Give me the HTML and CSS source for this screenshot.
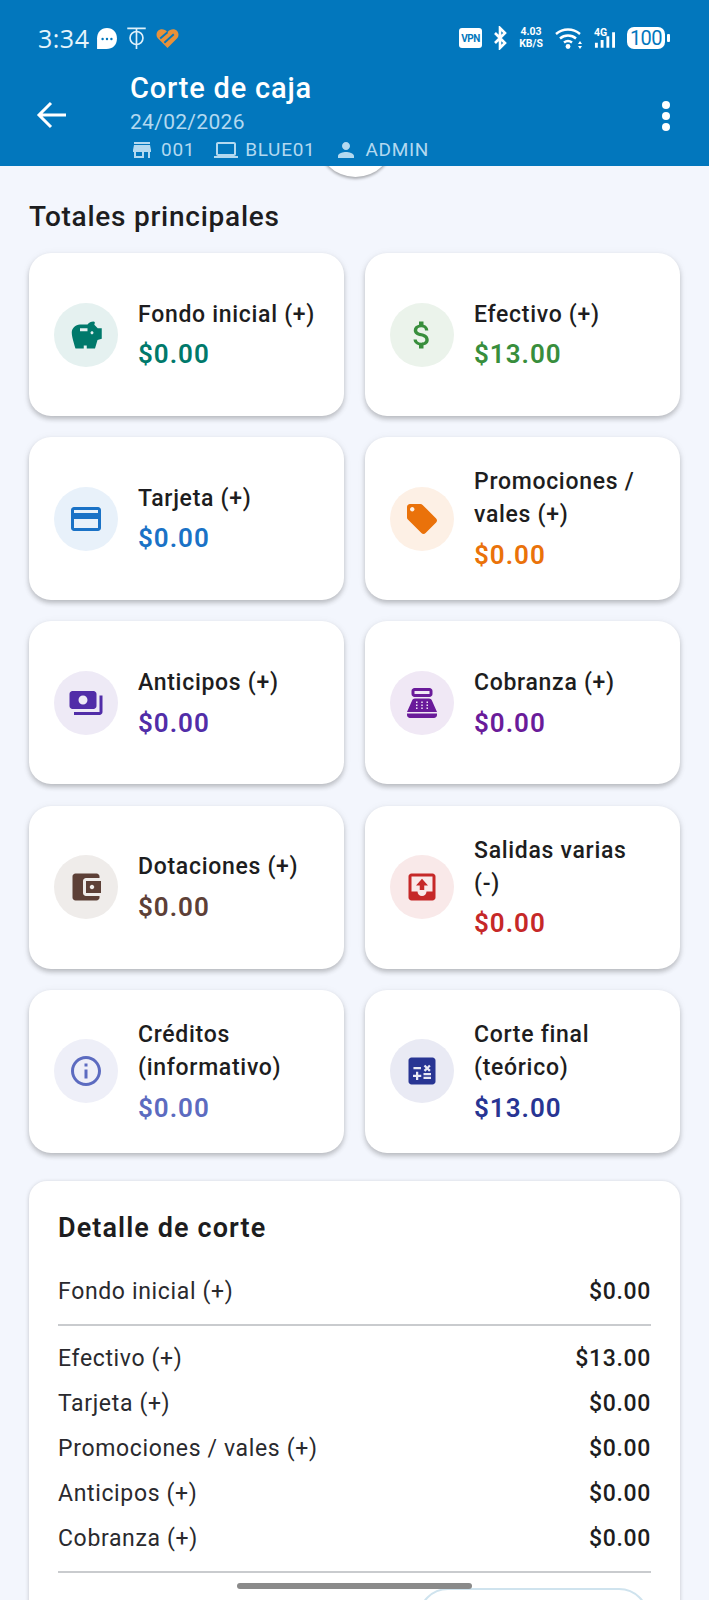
FILE: index.html
```html
<!DOCTYPE html>
<html lang="es">
<head>
<meta charset="utf-8">
<title>Corte de caja</title>
<link rel="stylesheet" href="styles.css">
</head>
<body>
<div class="screen">
  <header class="appbar">
    <div class="status">
      <div class="status-left">
        <span class="time">3:34</span>
        <svg class="si" width="20" height="21" viewBox="2 2 18 19"><path d="M11 2c5.500 0 9 4 9 9.500 0 6-4 9.500-9.500 9.500H2V11.500C2 6 5.500 2 11 2z" fill="#fff"/><circle cx="7" cy="12" r="1.100" fill="#0277bd"/><circle cx="11" cy="12" r="1.100" fill="#0277bd"/><circle cx="15" cy="12" r="1.100" fill="#0277bd"/></svg>
        <svg class="si" width="21" height="24" viewBox="2 0 20 26"><path d="M2 2.500h20M12 3v22" stroke="#dff1fb" stroke-width="1.800" fill="none"/><circle cx="12" cy="13" r="7" stroke="#dff1fb" stroke-width="1.800" fill="none"/></svg>
        <svg class="si" width="23" height="19" viewBox="1 3 22 18"><path d="M12 21L2.500 11.500C.5 9 1.500 4.500 5 3.500c2.500-.7 5 .2 7 2.500 2-2.300 4.500-3.200 7-2.500 3.500 1 4.500 5.500 2.500 8z" fill="#e8913a"/><path d="M5 12l7-6M9 16l9-8" stroke="#0277bd" stroke-width="1.800"/></svg>
      </div>
      <div class="status-right">
        <span class="vpn">VPN</span>
        <svg class="si" width="16" height="24" viewBox="0 0 16 24"><path d="M3 7l10 10-5 5V2l5 5L3 17" stroke="#fff" stroke-width="2.600" fill="none"/></svg>
        <span class="speed">4.03<br>KB/S</span>
        <svg class="si" width="30" height="24" viewBox="0 0 30 24"><path d="M2 8c7-6 17-6 24 0M6 12.500c4.500-4 11.500-4 16 0M10 16.500c2.500-2 5.500-2 8 0" stroke="#fff" stroke-width="2.400" fill="none"/><circle cx="14" cy="20.500" r="2.400" fill="#fff"/><path d="M26 15l2 3h-4zM26 23l2-3h-4z" fill="#fff"/></svg>
        <span class="net"><span class="net-label">4G</span>
          <svg width="21" height="16" viewBox="0 0 22 16"><path d="M1 16v-5h3v5zM7 16V8h3v8zM13 16V4h3v12zM19 16V0h3v16z" fill="#fff"/></svg>
        </span>
        <span class="batt"><span class="batt-body">100</span><span class="batt-tip"></span></span>
      </div>
    </div>
    <div class="toolbar">
      <svg class="back" width="32" height="32" viewBox="0 0 32 32"><path d="M30 16H4M15 4L3 16l12 12" stroke="#fff" stroke-width="3" fill="none"/></svg>
      <div class="titles">
        <div class="title">Corte de caja</div>
        <div class="date">24/02/2026</div>
        <div class="meta">
          <span class="meta-item"><svg width="24" height="24" viewBox="0 0 24 24"><path d="M20 4H4v2h16V4zm1 10v-2l-1-5H4l-1 5v2h1v6h10v-6h4v6h2v-6h1zm-9 4H6v-4h6v4z" fill="#b3d9f0"/></svg>001</span>
          <span class="meta-item"><svg width="24" height="24" viewBox="0 0 24 24"><path d="M20 18c1.100 0 2-.9 2-2V6c0-1.100-.9-2-2-2H4c-1.100 0-2 .9-2 2v10c0 1.100.9 2 2 2H0v2h24v-2h-4zM4 6h16v10H4V6z" fill="#b3d9f0"/></svg>BLUE01</span>
          <span class="meta-item"><svg width="24" height="24" viewBox="0 0 24 24"><path d="M12 12c2.200 0 4-1.800 4-4s-1.800-4-4-4-4 1.800-4 4 1.800 4 4 4zm0 2c-2.700 0-8 1.300-8 4v2h16v-2c0-2.700-5.300-4-8-4z" fill="#b3d9f0"/></svg>ADMIN</span>
        </div>
      </div>
      <svg class="more" width="8" height="32" viewBox="0 0 8 32"><circle cx="4" cy="5" r="4" fill="#fff"/><circle cx="4" cy="16" r="4" fill="#fff"/><circle cx="4" cy="27" r="4" fill="#fff"/></svg>
    </div>
  </header>
  <span class="peek"></span>

  <main class="content">
    <h2 class="section">Totales principales</h2>
    <section class="grid">
      <article class="card teal"><span class="ic"><svg width="36" height="36" viewBox="0 0 24 24"><path d="M19.830 7.500l-2.270-2.270c.07-.42.18-.81.32-1.150C18.040 3.710 17.700 3 17 3c-1.640 0-3.090.79-4 2H8C4.960 5 2.500 7.460 2.500 10.500S5 21 5 21h5.500v-2h2v2H18l1.680-5.590 2.820-.94V7.500h-2.670zM13 9.500H8v-2h5v2zm3 2c-.55 0-1-.45-1-1s.45-1 1-1 1 .45 1 1-.45 1-1 1z" fill="currentColor"/></svg></span><div class="tx"><div class="lb">Fondo inicial (+)</div><div class="val">$0.00</div></div></article>
      <article class="card green"><span class="ic"><svg width="36" height="36" viewBox="0 0 24 24"><path d="M11.800 10.900c-2.270-.59-3-1.200-3-2.150 0-1.090 1.010-1.850 2.700-1.850 1.780 0 2.440.85 2.500 2.100h2.210c-.07-1.720-1.120-3.300-3.210-3.810V3h-3v2.160c-1.940.42-3.500 1.680-3.500 3.610 0 2.310 1.910 3.460 4.700 4.130 2.500.6 3 1.480 3 2.410 0 .69-.49 1.790-2.700 1.790-2.060 0-2.870-.92-2.980-2.100h-2.200c.12 2.190 1.760 3.420 3.680 3.830V21h3v-2.150c1.950-.37 3.500-1.500 3.500-3.550 0-2.840-2.430-3.810-4.700-4.400z" fill="currentColor"/></svg></span><div class="tx"><div class="lb">Efectivo (+)</div><div class="val">$13.00</div></div></article>
      <article class="card blue"><span class="ic"><svg width="36" height="36" viewBox="0 0 24 24"><path d="M20 4H4c-1.100 0-2 .9-2 2v12c0 1.100.9 2 2 2h16c1.100 0 2-.9 2-2V6c0-1.100-.9-2-2-2zm0 14H4v-6h16v6zm0-10H4V6h16v2z" fill="currentColor"/></svg></span><div class="tx"><div class="lb">Tarjeta (+)</div><div class="val">$0.00</div></div></article>
      <article class="card orange"><span class="ic"><svg width="36" height="36" viewBox="0 0 24 24"><path d="M21.400 11.600l-9-9C12 2.200 11.500 2 11 2H4c-1.100 0-2 .9-2 2v7c0 .6.200 1.100.6 1.400l9 9c.4.4.9.6 1.400.6s1-.2 1.400-.6l7-7c.4-.4.6-.9.6-1.400 0-.6-.2-1.100-.6-1.400zM5.500 7C4.700 7 4 6.300 4 5.500S4.700 4 5.500 4 7 4.700 7 5.500 6.300 7 5.500 7z" fill="currentColor"/></svg></span><div class="tx"><div class="lb">Promociones / vales (+)</div><div class="val">$0.00</div></div></article>
      <article class="card deep"><span class="ic"><svg width="36" height="36" viewBox="0 0 24 24"><path d="M19 14V6c0-1.100-.9-2-2-2H3c-1.100 0-2 .9-2 2v8c0 1.100.9 2 2 2h14c1.100 0 2-.9 2-2zm-9-1c-1.700 0-3-1.300-3-3s1.300-3 3-3 3 1.300 3 3-1.300 3-3 3zm13-6v11c0 1.100-.9 2-2 2H4v-2h17V7h2z" fill="currentColor"/></svg></span><div class="tx"><div class="lb">Anticipos (+)</div><div class="val">$0.00</div></div></article>
      <article class="card purple"><span class="ic"><svg width="36" height="36" viewBox="0 0 24 24"><path d="M17 2H7c-1.100 0-2 .9-2 2v2c0 1.100.9 2 2 2h10c1.100 0 2-.9 2-2V4c0-1.100-.9-2-2-2zm0 4H7V4h10v2zm3 16H4c-1.100 0-2-.9-2-2v-1h20v1c0 1.100-.9 2-2 2zM18.530 10.190C18.230 9.470 17.550 9 16.780 9H7.220c-.77 0-1.450.47-1.750 1.190L2 18h20l-3.470-7.810zM9 16H8v-1h1v1zm0-2H8v-1h1v1zm0-2H8v-1h1v1zm3.500 4h-1v-1h1v1zm0-2h-1v-1h1v1zm0-2h-1v-1h1v1zm3.500 4h-1v-1h1v1zm0-2h-1v-1h1v1zm0-2h-1v-1h1v1z" fill="currentColor" fill-rule="evenodd"/></svg></span><div class="tx"><div class="lb">Cobranza (+)</div><div class="val">$0.00</div></div></article>
      <article class="card brown"><span class="ic"><svg width="36" height="36" viewBox="0 0 24 24"><path d="M21 18v1c0 1.100-.9 2-2 2H5c-1.100 0-2-.9-2-2V5c0-1.100.9-2 2-2h14c1.100 0 2 .9 2 2v1h-9c-1.100 0-2 .9-2 2v8c0 1.100.9 2 2 2h9zm-9-2h10V8H12v8zm4-2.500c-.8 0-1.500-.7-1.500-1.500s.7-1.500 1.500-1.500 1.500.7 1.500 1.500-.7 1.500-1.500 1.500z" fill="currentColor"/></svg></span><div class="tx"><div class="lb">Dotaciones (+)</div><div class="val">$0.00</div></div></article>
      <article class="card red"><span class="ic"><svg width="36" height="36" viewBox="0 0 24 24"><path d="M19 3H5c-1.100 0-2 .9-2 2v14c0 1.100.9 2 2 2h14c1.100 0 2-.9 2-2V5c0-1.100-.9-2-2-2zm0 12h-4c0 1.700-1.300 3-3 3s-3-1.300-3-3H5V5h14v10zM8 11h2.500v3h3v-3H16l-4-4.500z" fill="currentColor"/></svg></span><div class="tx"><div class="lb">Salidas varias (-)</div><div class="val">$0.00</div></div></article>
      <article class="card indigo"><span class="ic"><svg width="36" height="36" viewBox="0 0 24 24"><path d="M11 7h2v2h-2zm0 4h2v6h-2zm1-9C6.500 2 2 6.500 2 12s4.500 10 10 10 10-4.500 10-10S17.500 2 12 2zm0 18c-4.400 0-8-3.600-8-8s3.600-8 8-8 8 3.600 8 8-3.600 8-8 8z" fill="currentColor"/></svg></span><div class="tx"><div class="lb">Créditos (informativo)</div><div class="val">$0.00</div></div></article>
      <article class="card navy"><span class="ic"><svg width="36" height="36" viewBox="0 0 24 24"><path d="M19 3H5c-1.100 0-2 .9-2 2v14c0 1.100.9 2 2 2h14c1.100 0 2-.9 2-2V5c0-1.100-.9-2-2-2zm-5.900 5.900l1.100-1.100 1.300 1.300 1.200-1.300 1.100 1.100-1.300 1.200 1.300 1.300-1.100 1.100-1.200-1.300-1.300 1.300-1.100-1.100 1.300-1.300zM6.300 9.400h5v1.500h-5zM11.500 16h-2v2H8v-2H6v-1.500h2v-2h1.500v2h2zm6.500 1.300h-5v-1.500h5zm0-2.500h-5v-1.500h5z" fill="currentColor"/></svg></span><div class="tx"><div class="lb">Corte final (teórico)</div><div class="val">$13.00</div></div></article>
    </section>

    <section class="detail">
      <h3 class="detail-title">Detalle de corte</h3>
      <div class="row"><span>Fondo inicial (+)</span><b>$0.00</b></div>
      <hr class="rule">
      <div class="row"><span>Efectivo (+)</span><b>$13.00</b></div>
      <div class="row"><span>Tarjeta (+)</span><b>$0.00</b></div>
      <div class="row"><span>Promociones / vales (+)</span><b>$0.00</b></div>
      <div class="row"><span>Anticipos (+)</span><b>$0.00</b></div>
      <div class="row"><span>Cobranza (+)</span><b>$0.00</b></div>
      <hr class="rule">
    </section>
  </main>
  <span class="pill"></span>
  <span class="home"></span>
</div>
</body>
</html>
```
FILE: styles.css
```css
* { box-sizing: border-box; }
html, body { margin: 0; padding: 0; }
body { font-family: Roboto, "Noto Sans", sans-serif; color: #1d1d20; }
.screen { position: relative; width: 709px; height: 1600px; overflow: hidden; background: #f3f6fd; }
.appbar { background: #0277bd; height: 166px; color: #fff; position: relative; z-index: 2; overflow: hidden; }
.status { display: flex; justify-content: space-between; align-items: center; height: 36px; margin-top: 20px; padding: 0 39px 0 38px; }
.status-left { display: flex; align-items: center; gap: 9px; }
.status-right { display: flex; align-items: center; gap: 10px; }
.si { display: block; flex: none; }
.time { font-family: "Open Sans", sans-serif; font-size: 25px; letter-spacing: .5px; color: #e6f4fb; width: 50px; white-space: nowrap; }
.vpn { background: #fff; color: #0277bd; font-size: 10px; font-weight: 700; border-radius: 3px; width: 23px; height: 20px; display: flex; align-items: center; justify-content: center; letter-spacing: -.5px; }
.speed { font-size: 10.500px; line-height: 12px; font-weight: 700; text-align: center; width: 26px; }
.net { display: flex; flex-direction: column; align-items: flex-start; width: 21px; }
.net-label { font-size: 10.500px; line-height: 9px; font-weight: 700; margin-bottom: -5px; }
.batt { display: flex; align-items: center; gap: 2px; margin-left: 2px; }
.batt-body { background: #fff; color: #0277bd; border-radius: 7px; width: 38px; height: 22px; font-size: 20px; line-height: 22px; text-align: center; letter-spacing: -.5px; }
.batt-tip { background: #fff; width: 3px; height: 8px; border-radius: 1px; }
.toolbar { display: flex; align-items: flex-start; padding: 0 36px; height: 110px; position: relative; }
.back { margin-top: 43px; flex: none; }
.titles { margin-left: 62px; flex: 1; }
.title { font-size: 29px; font-weight: 500; line-height: 36px; margin-top: 14px; margin-bottom: 2px; letter-spacing: .8px; }
.date { font-size: 21px; line-height: 28px; color: #b3d9f0; letter-spacing: .3px; }
.meta { display: flex; gap: 19px; color: #b3d9f0; font-size: 19px; line-height: 28px; letter-spacing: .7px; }
.meta-item { display: flex; align-items: center; gap: 7px; }
.more { margin-top: 44px; flex: none; margin-right: 3px; }
.peek { position: absolute; left: 317px; top: 100px; width: 77px; height: 77px; border-radius: 50%; background: #fff; box-shadow: 0 2px 3px rgba(0,0,0,.3); z-index: 1; }
.content { padding: 0 29px; }
.section { margin: 29px 0 0; font-size: 28px; font-weight: 500; line-height: 44px; height: 58px; letter-spacing: .75px; }
.grid { display: grid; grid-template-columns: 315px 315px; grid-auto-rows: 163px; column-gap: 21px; row-gap: 21.200px; }
.card { background: #fff; border-radius: 22px; display: flex; align-items: center; gap: 20px; padding: 0 28px 0 25px; box-shadow: 0 3px 5px rgba(0,0,0,.22), 0 1px 10px rgba(0,0,0,.05); }
.ic { width: 64px; height: 64px; border-radius: 50%; flex: none; display: flex; align-items: center; justify-content: center; background: var(--tint); color: var(--c); }
.tx { flex: 1; min-width: 0; }
.lb { font-size: 23px; line-height: 33px; font-weight: 500; letter-spacing: .7px; color: #1d1d20; }
.val { font-size: 26px; font-weight: 600; line-height: 34px; margin-top: 6.500px; letter-spacing: 1px; color: var(--c); }
.teal { --c: #00796b; --tint: #e5f1f0; }
.green { --c: #388e3c; --tint: #ebf3eb; }
.blue { --c: #1a72c6; --tint: #e8f1fa; }
.orange { --c: #ea720a; --tint: #fdf0e5; }
.deep { --c: #512da8; --tint: #eeeaf6; }
.purple { --c: #6a1b9a; --tint: #f0e8f5; }
.brown { --c: #5d4037; --tint: #efecea; }
.red { --c: #c62828; --tint: #f9e9e9; }
.indigo { --c: #5c6bc0; --tint: #eeeff8; }
.navy { --c: #283593; --tint: #e9eaf4; }
.detail { margin-top: 28px; background: #fff; border-radius: 18px; padding: 25px 29px; height: 500px; box-shadow: 0 1px 4px rgba(0,0,0,.2); }
.detail-title { margin: 0 0 19px; font-size: 27px; font-weight: 600; line-height: 44px; letter-spacing: 1.100px; }
.row { display: flex; justify-content: space-between; align-items: center; height: 45px; font-size: 23px; letter-spacing: .65px; color: #2a2a2e; }
.row b { font-weight: 500; font-size: 23px; color: #1d1d20; }
.rule { border: 0; height: 2px; background: #c9cbce; margin: 10px 0 10px; }
.pill { position: absolute; left: 418px; top: 1588px; width: 231px; height: 60px; background: #fff; border: 2px solid #cfe3ee; border-radius: 30px; }
.home { position: absolute; left: 237px; top: 1583px; width: 235px; height: 6px; border-radius: 3px; background: #8a8a8a; }
```
